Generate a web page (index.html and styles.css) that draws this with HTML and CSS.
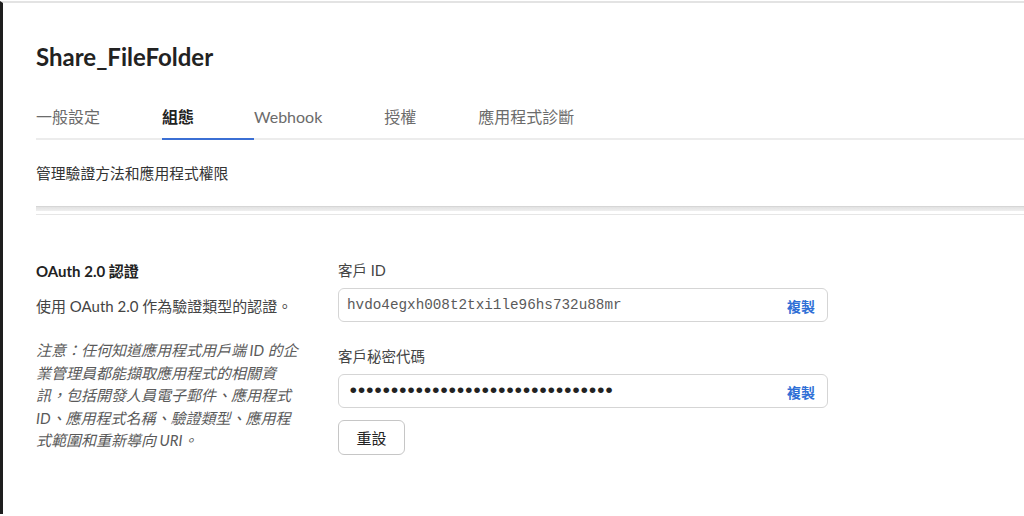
FILE: index.html
```html
<!DOCTYPE html>
<html lang="zh-Hant">

<head>
    <meta charset="UTF-8">
    <meta name="viewport" content="width=device-width, initial-scale=1.0">
    <title>Share_FileFolder</title>
    <link rel="stylesheet" href="styles.css">
</head>

<body>
    <div class="frame">
        <h1 class="app-title">Share_FileFolder</h1>

        <div class="tabs">
            <a class="tab">一般設定</a>
            <a class="tab active">組態</a>
            <a class="tab">Webhook</a>
            <a class="tab">授權</a>
            <a class="tab">應用程式診斷</a>
        </div>

        <p class="page-desc">管理驗證方法和應用程式權限</p>
        <div class="band"></div>
        <div class="band-line"></div>

        <div class="section">
            <div class="section-info">
                <h3 class="section-title">OAuth 2.0 認證</h3>
                <p class="section-text">使用 OAuth 2.0 作為驗證類型的認證。</p>
                <p class="section-note">注意：任何知道應用程式用戶端 ID 的企業管理員都能擷取應用程式的相關資訊，包括開發人員電子郵件、應用程式 ID、應用程式名稱、驗證類型、應用程式範圍和重新導向 URI。</p>
            </div>

            <div class="section-fields">
                <label class="field-label">客戶 ID</label>
                <div class="field-box">
                    <span class="field-value">hvdo4egxh008t2txi1le96hs732u88mr</span>
                    <a class="copy-link">複製</a>
                </div>

                <label class="field-label second">客戶秘密代碼</label>
                <div class="field-box">
                    <span class="field-value secret">••••••••••••••••••••••••••••••••</span>
                    <a class="copy-link">複製</a>
                </div>

                <button class="reset-button">重設</button>
            </div>
        </div>
    </div>
</body>

</html>
```

FILE: styles.css
```css
body {
    margin: 0;
    padding-top: 1px;
    background: #fff;
    font-family: Lato, "Noto Sans CJK TC", sans-serif;
    color: #222;
}

.frame {
    border-left: 3px solid #1e1e1e;
    border-top: 2px solid #e3e3e3;
    height: 513px;
    padding: 39px 0 0 33px;
    box-sizing: border-box;
    overflow: hidden;
}

.app-title {
    margin: 0;
    font-size: 24px;
    line-height: 30px;
    font-weight: 700;
    color: #222;
}

.tabs {
    display: flex;
    margin-top: 35px;
    border-bottom: 2px solid #ececec;
}

.tab {
    font-size: 16px;
    line-height: 20px;
    color: #6b6b6b;
    padding: 0 62px 11px 0;
    margin-bottom: -2px;
    border-bottom: 2px solid transparent;
}

.tab.active {
    color: #222;
    font-weight: 700;
    padding-right: 60px;
    border-bottom-color: #3b6fd4;
}

.page-desc {
    margin: 23px 0 0;
    font-size: 14.8px;
    line-height: 20px;
    color: #333;
}

.band {
    margin-top: 23px;
    height: 4px;
    border-top: 1px solid #d6d6d6;
    background: linear-gradient(#e2e2e2, #efefef);
}

.band-line {
    margin-top: 3px;
    height: 1px;
    background: #e6e6e6;
}

.section {
    display: grid;
    grid-template-columns: 266px 490px;
    column-gap: 36px;
    padding-top: 46px;
}

.section-title {
    margin: 0;
    font-size: 15px;
    line-height: 20px;
    font-weight: 700;
    color: #222;
}

.section-text {
    margin: 14px 0 0;
    font-size: 15px;
    line-height: 22px;
    color: #444;
}

.section-note {
    margin: 22px 0 0;
    font-size: 15px;
    line-height: 22.5px;
    font-style: italic;
    color: #5a5a5a;
}

.section-fields {
    display: flex;
    flex-direction: column;
    align-items: flex-start;
}

.field-label {
    font-size: 14.5px;
    line-height: 20px;
    color: #444;
}

.field-label.second {
    margin-top: 25px;
}

.field-box {
    margin-top: 7px;
    width: 100%;
    height: 34px;
    box-sizing: border-box;
    border: 1px solid #d5d5d5;
    border-radius: 6px;
    display: flex;
    align-items: center;
    justify-content: space-between;
    padding: 0 12px 0 8px;
}

.field-value {
    font-family: "Liberation Mono", monospace;
    font-size: 14.3px;
    color: #5a5a5a;
}

.field-value.secret {
    font-size: 21px;
    letter-spacing: -4.35px;
    color: #222;
}

.copy-link {
    font-size: 14px;
    font-weight: 700;
    color: #2f6fd6;
    margin-top: 2px;
}

.reset-button {
    margin-top: 12px;
    width: 67px;
    height: 35px;
    background: #fff;
    border: 1px solid #c6c6c6;
    border-radius: 6px;
    font-family: Lato, "Noto Sans CJK TC", sans-serif;
    font-size: 15px;
    color: #222;
}
```
